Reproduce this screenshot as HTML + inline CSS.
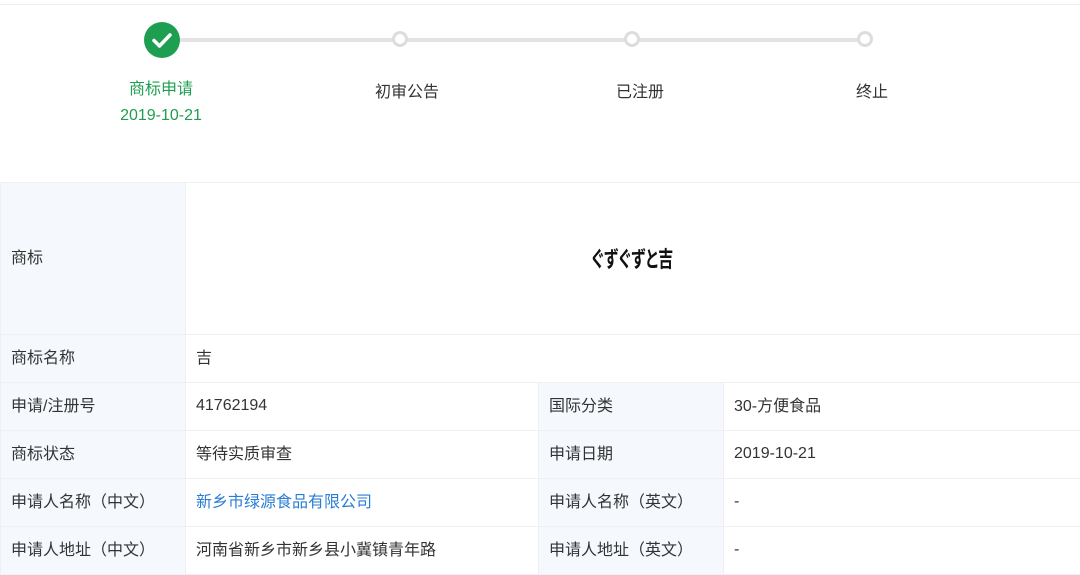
<!DOCTYPE html>
<html><head><meta charset="utf-8"><style>
body{margin:0;width:1080px;height:569px;overflow:hidden;background:#fff;font-family:"Liberation Sans","Noto Sans CJK SC",sans-serif;font-size:16px;color:#333}
.top{position:absolute;left:0;top:4px;width:1080px;height:1px;background:#eee}
.line{position:absolute;left:162px;top:38px;width:704px;height:4px;background:#e3e3e3}
.dot{position:absolute;width:10px;height:10px;border:3px solid #ddd;border-radius:50%;background:#fff;top:31px}
.ok{position:absolute;left:144px;top:22px;width:36px;height:36px;border-radius:50%;background:#1e9e50}
.lab{position:absolute;width:160px;text-align:center;line-height:26px;font-size:16px}
table{position:absolute;left:0;top:182px;border-collapse:collapse;width:1081px}
td{border:1px solid #eef0f3;padding:0 10px;height:47px;font-size:16px;line-height:22px;vertical-align:middle}
td span{display:inline-block;vertical-align:middle;line-height:22px}
td.l{background:#f5f9fd;width:164px}
a{color:#2a7dd4;text-decoration:none}
.mk{display:inline-block;font-size:22px;font-weight:bold;color:#111;letter-spacing:-2px;transform:scaleX(0.68)}
</style></head><body>
<div class="top"></div>
<div class="line"></div>
<div class="ok"><svg width="36" height="36"><path d="M10 18.5l5.5 5.5L26 13" fill="none" stroke="#fff" stroke-width="3.5" stroke-linecap="round" stroke-linejoin="round"/></svg></div>
<div class="dot" style="left:392px"></div>
<div class="dot" style="left:624px"></div>
<div class="dot" style="left:857px"></div>
<div class="lab" style="left:81px;top:77px;color:#1e9e50">商标申请<br>2019-10-21</div>
<div class="lab" style="left:327px;top:80px">初审公告</div>
<div class="lab" style="left:560px;top:80px">已注册</div>
<div class="lab" style="left:792px;top:80px">终止</div>
<table>
<tr><td class="l" style="height:151px">商标</td><td colspan="3" style="text-align:center;padding-left:0;padding-right:4px"><span class="mk" style="position:relative;top:2px">ぐずぐずと吉</span></td></tr>
<tr><td class="l">商标名称</td><td colspan="3">吉</td></tr>
<tr><td class="l">申请/注册号</td><td style="width:332px"><span>41762194</span></td><td class="l">国际分类</td><td>30-方便食品</td></tr>
<tr><td class="l">商标状态</td><td>等待实质审查</td><td class="l">申请日期</td><td><span>2019-10-21</span></td></tr>
<tr><td class="l">申请人名称（中文）</td><td><a>新乡市绿源食品有限公司</a></td><td class="l">申请人名称（英文）</td><td><span>-</span></td></tr>
<tr><td class="l">申请人地址（中文）</td><td>河南省新乡市新乡县小冀镇青年路</td><td class="l">申请人地址（英文）</td><td><span>-</span></td></tr>
</table>
</body></html>
